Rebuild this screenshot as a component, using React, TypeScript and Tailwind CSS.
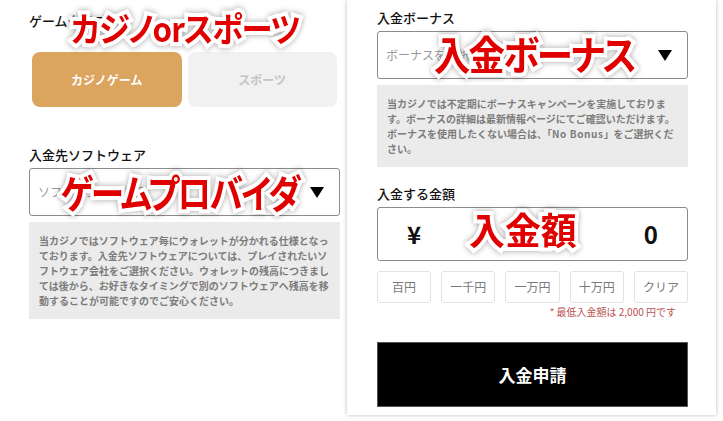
import React from 'react';

const Caret = () => (
    <svg width="14" height="11" viewBox="0 0 14 11" className="shrink-0">
        <polygon points="0,0 14,0 7,11" fill="#000" />
    </svg>
);

// red annotation text laid over the screenshot
const Note = ({ text, className }: { text: string; className: string }) => (
    <div
        className={`absolute origin-left whitespace-nowrap font-bold text-[#e00000] leading-none [paint-order:stroke_fill] [-webkit-text-stroke:8px_#fff] [font-feature-settings:'palt'] drop-shadow-[0_0_3px_rgba(0,0,0,0.35)] ${className}`}
    >
        {text}
    </div>
);

const SelectBox = ({ placeholder }: { placeholder: string }) => (
    <div className="mt-[4px] h-[48px] border border-[#8c8c8c] rounded-[3px] flex items-center justify-between pl-[8px] pr-[15px] bg-white">
        <span className="text-[12px] text-[#999]">{placeholder}</span>
        <Caret />
    </div>
);

const amounts = ['百円', '一千円', '一万円', '十万円', 'クリア'];

export default function App() {
    return (
        <div className="relative w-[723px] h-[421px] overflow-hidden bg-white flex font-['Noto_Sans_CJK_JP',sans-serif] text-[#111]">
            {/* Left panel */}
            <div className="w-[347px] shrink-0 pl-[29px] pr-[7px] pt-[12px]">
                <div className="text-[13px] leading-[18px] font-medium">ゲームタイプ</div>
                <div className="mt-[22px] px-[3px] grid grid-cols-2 gap-[6px]">
                    <button className="h-[55px] rounded-[8px] bg-[#dba45f] text-white text-[12px] font-bold">カジノゲーム</button>
                    <button className="h-[55px] rounded-[8px] bg-[#f1f1f1] text-[#c4c4c4] text-[12px] font-bold">スポーツ</button>
                </div>
                <div className="mt-[39px] text-[13px] leading-[18px] font-medium">入金先ソフトウェア</div>
                <div className="mt-[1px]">
                    <SelectBox placeholder="ソフトウェアを選択" />
                </div>
                <div className="mt-[6px] bg-[#ebebeb] px-[10px] py-[11px] text-[10px] leading-[15px] font-bold text-[#7c7c7c]">
                    当カジノではソフトウェア毎にウォレットが分かれる仕様となっております。入金先ソフトウェアについては、プレイされたいソフトウェア会社をご選択ください。ウォレットの残高につきましては後から、お好きなタイミングで別のソフトウェアへ残高を移動することが可能ですのでご安心ください。
                </div>
            </div>

            {/* Right card */}
            <div className="w-[369px] h-[415px] shrink-0 bg-white shadow-[0_0_4px_rgba(0,0,0,0.28)] pl-[30px] pr-[28px] pt-[9px]">
                <div className="text-[13px] leading-[18px] font-medium">入金ボーナス</div>
                <SelectBox placeholder="ボーナスを選択" />
                <div className="mt-[6px] bg-[#ebebeb] px-[10px] py-[11px] text-[10px] leading-[15px] font-bold text-[#7c7c7c]">
                    当カジノでは不定期にボーナスキャンペーンを実施しております。ボーナスの詳細は最新情報ページにてご確認いただけます。ボーナスを使用したくない場合は、「<span className="tracking-[0.6px]">No Bonus</span>」をご選択ください。
                </div>
                <div className="mt-[18px] text-[13px] leading-[18px] font-medium">入金する金額</div>
                <div className="mt-[4px] h-[54px] border border-[#8c8c8c] rounded-[3px] flex items-center justify-between px-[29px] text-[24px] font-bold">
                    <span>¥</span>
                    <span>0</span>
                </div>
                <div className="mt-[10px] grid grid-cols-5 gap-[10px]">
                    {amounts.map((a) => (
                        <button key={a} className="h-[32px] border border-[#e2e2e2] rounded-[3px] text-[12px] text-[#7a7a7a] bg-white">
                            {a}
                        </button>
                    ))}
                </div>
                <div className="mt-[2px] pr-[12px] text-right text-[10px] leading-[14px] text-[#b9534f]">* 最低入金額は 2,000 円です</div>
                <button className="mt-[23px] w-full h-[65px] bg-black border border-[#555] text-white text-[17px] font-bold">入金申請</button>
            </div>

            {/* Annotations */}
            <Note text="カジノorスポーツ" className="left-[71px] top-[11px] text-[34px] tracking-[-1px] scale-x-[0.92]" />
            <Note text="ゲームプロバイダ" className="left-[61px] top-[172px] text-[39px] tracking-[-2px] scale-x-[0.86]" />
            <Note text="入金ボーナス" className="left-[434px] top-[33px] text-[40px] tracking-[-2px] scale-x-[0.91]" />
            <Note text="入金額" className="left-[469px] top-[211px] text-[37px] scale-x-[0.97]" />
        </div>
    );
}
